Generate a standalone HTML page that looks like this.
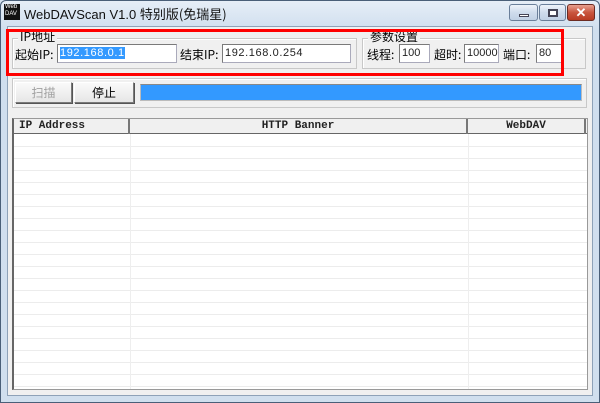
<!DOCTYPE html>
<html><head><meta charset="utf-8"><style>
*{margin:0;padding:0;box-sizing:border-box}
body{width:600px;height:403px;overflow:hidden;background:#d3e0ee;font-family:"Liberation Sans","Noto Sans CJK SC",sans-serif;position:relative}
.a{position:absolute}
.frame{left:0;top:0;width:600px;height:403px;border:1px solid #4a5f78;border-radius:6px 6px 0 0;background:linear-gradient(#e6eef7,#cfdeee 30px,#d0dfee)}
.client{left:7px;top:26px;width:586px;height:370px;background:#f0f0f0;border:1px solid #8ea2b8}
.t{font-size:12px;color:#000;white-space:nowrap}
.cj{font-family:"Noto Sans CJK SC","WenQuanYi Zen Hei",sans-serif;font-size:12px}
.inp{background:#fff;border:1px solid #aab;border-top-color:#7a7a7a;border-left-color:#7a7a7a;font-family:"Liberation Sans",sans-serif;font-size:11px;letter-spacing:0.6px;line-height:16px;padding-left:2px;color:#222}
.grp{border:1px solid #c8c8c8;box-shadow:1px 1px 0 #fff inset}
.btn{background:linear-gradient(#fafafa,#e6e6e6);border:1px solid #7a7a7a;border-top-color:#fff;border-left-color:#fff;box-shadow:1px 1px 0 #555;text-align:center;line-height:19px}
.wb{border:1px solid #6a7f9a;border-radius:3px;background:linear-gradient(#eef3fa,#cfdcec 50%,#c0d0e4)}
.hd{font-family:"Liberation Mono","DejaVu Sans Mono",monospace;font-size:11px;line-height:15px;font-weight:bold;color:#222}
</style></head><body>
<div class="a frame"></div>
<div class="a" style="left:4px;top:4px;width:16px;height:16px;background:#111;color:#fff;font-size:6px;line-height:7px;padding-left:1px;font-family:'Liberation Sans'">Web<br>DAV</div>
<div class="a t" style="left:24px;top:4px;font-size:13px;color:#111">WebDAVScan V1.0 <span class="cj" style="font-size:13px">特别版(免瑞星)</span></div>
<div class="a wb" style="left:509px;top:4px;width:29px;height:17px"><div class="a" style="left:9px;top:9px;width:10px;height:3px;background:#fff;border:1px solid #445"></div></div>
<div class="a wb" style="left:539px;top:4px;width:27px;height:17px"><div class="a" style="left:8px;top:4px;width:10px;height:8px;border:2px solid #445;background:#fff"></div></div>
<div class="a" style="left:567px;top:4px;width:28px;height:17px;border:1px solid #6b2b22;border-radius:3px;background:linear-gradient(#e8a08e,#c9553e 50%,#b83a22);color:#fff;font-weight:bold;font-size:13px;text-align:center;line-height:15px">✕</div>
<div class="a client"></div>

<div class="a grp" style="left:12px;top:38px;width:345px;height:31px"></div>
<div class="a cj" style="left:18px;top:30px;background:#f0f0f0;padding:0 2px;line-height:14px">IP地址</div>
<div class="a cj" style="left:15px;top:46px">起始IP:</div>
<div class="a inp" style="left:57px;top:44px;width:120px;height:19px"><span style="background:#3399ff;color:#fff">192.168.0.1</span></div>
<div class="a cj" style="left:180px;top:46px">结束IP:</div>
<div class="a inp" style="left:222px;top:44px;width:129px;height:19px">192.168.0.254</div>

<div class="a grp" style="left:362px;top:38px;width:224px;height:31px"></div>
<div class="a cj" style="left:368px;top:30px;background:#f0f0f0;padding:0 2px;line-height:14px">参数设置</div>
<div class="a cj" style="left:367px;top:46px">线程:</div>
<div class="a inp" style="left:399px;top:44px;width:31px;height:19px;letter-spacing:0">100</div>
<div class="a cj" style="left:434px;top:46px">超时:</div>
<div class="a inp" style="left:464px;top:44px;width:35px;height:19px;letter-spacing:0">10000</div>
<div class="a cj" style="left:503px;top:46px">端口:</div>
<div class="a inp" style="left:536px;top:44px;width:27px;height:19px;letter-spacing:0">80</div>

<div class="a" style="left:6px;top:29px;width:558px;height:47px;border:3px solid #f00"></div>

<div class="a grp" style="left:12px;top:78px;width:575px;height:30px"></div>
<div class="a btn cj" style="left:15px;top:82px;width:57px;height:21px;color:#a0a0a0">扫描</div>
<div class="a btn cj" style="left:74px;top:82px;width:60px;height:21px">停止</div>
<div class="a" style="left:140px;top:84px;width:442px;height:17px;border:1px solid #bbb;background:#3399ff;border-top-color:#888"></div>

<div class="a" style="left:12px;top:118px;width:576px;height:272px;background:#fff;border:1px solid #999;border-left:2px solid #666;
background-image:repeating-linear-gradient(#fff 0 11px,#ececec 11px 12px);background-position:0 16px"></div>
<div class="a" style="left:130px;top:134px;width:1px;height:255px;background:#eee"></div>
<div class="a" style="left:468px;top:134px;width:1px;height:255px;background:#eee"></div>
<div class="a" style="left:14px;top:119px;width:573px;height:15px;background:#f0f0f0;border-bottom:1px solid #666"></div>
<div class="a hd" style="left:14px;top:119px;width:116px;height:15px;border-right:2px solid #777;padding-left:5px;font-family:'Liberation Mono',monospace">IP Address</div>
<div class="a hd" style="left:130px;top:119px;width:338px;height:15px;border-right:2px solid #777;text-align:center">HTTP Banner</div>
<div class="a hd" style="left:468px;top:119px;width:118px;height:15px;border-right:2px solid #777;text-align:center">WebDAV</div>
</body></html>
